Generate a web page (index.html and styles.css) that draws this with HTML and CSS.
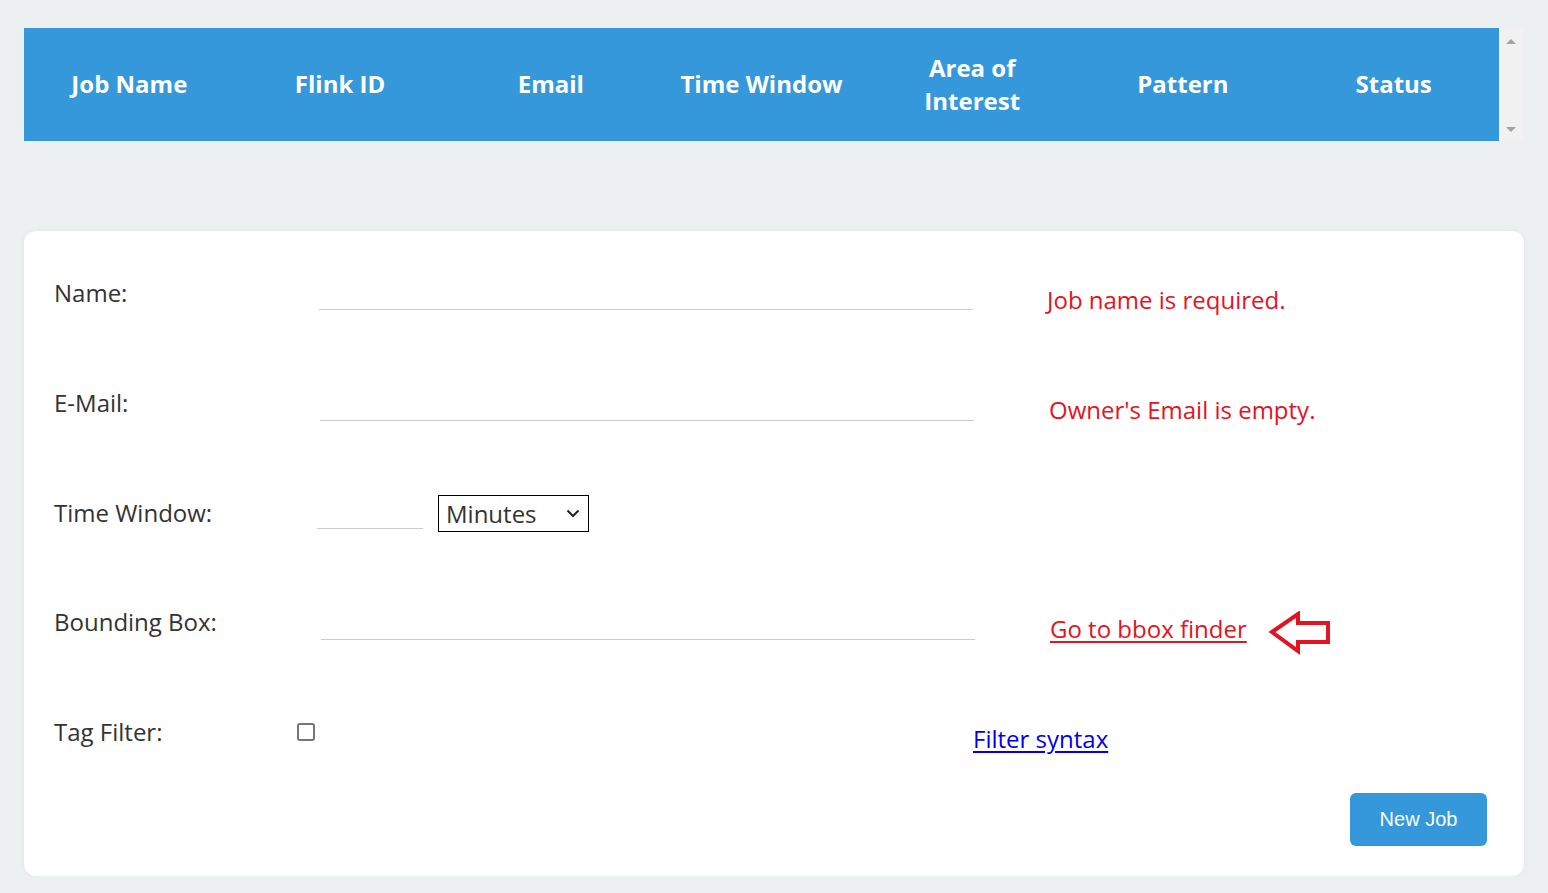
FILE: index.html
```html
<!DOCTYPE html>
<html lang="en">
<head>
<meta charset="utf-8">
<title>Jobs</title>
<link rel="stylesheet" href="styles.css">
</head>
<body>
<div class="jobs">
  <div class="jobs-head">
    <div class="th">Job Name</div>
    <div class="th">Flink ID</div>
    <div class="th">Email</div>
    <div class="th">Time Window</div>
    <div class="th">Area of Interest</div>
    <div class="th">Pattern</div>
    <div class="th">Status</div>
  </div>
  <div class="scrollbar">
    <span class="arrow-up"></span>
    <span class="arrow-down"></span>
  </div>
</div>

<form class="card">
  <div class="row">
    <label class="label">Name:</label>
    <div class="field"><input class="line-input wide" type="text"></div>
    <div class="msg error">Job name is required.</div>
  </div>
  <div class="row">
    <label class="label">E-Mail:</label>
    <div class="field"><input class="line-input wide email" type="text"></div>
    <div class="msg error email-msg">Owner's Email is empty.</div>
  </div>
  <div class="row">
    <label class="label">Time Window:</label>
    <div class="field">
      <input class="line-input short" type="text">
      <div class="select">
        <span>Minutes</span>
        <svg class="chev" width="14" height="9" viewBox="0 0 14 9"><path d="M1.5 1.5 L7 7 L12.5 1.5" fill="none" stroke="#222" stroke-width="2"/></svg>
      </div>
    </div>
    <div class="msg"></div>
  </div>
  <div class="row">
    <label class="label">Bounding Box:</label>
    <div class="field"><input class="line-input wide bbox" type="text"></div>
    <div class="msg bbox-msg">
      <a class="red-link" href="#">Go to bbox finder</a>
      <svg class="arrow" width="64" height="44" viewBox="0 0 64 44"><polygon points="4,21 30,3 30,12 60,12 60,31 30,31 30,40" fill="none" stroke="#e3131f" stroke-width="4" stroke-linejoin="miter"/></svg>
    </div>
  </div>
  <div class="row row-last">
    <label class="label">Tag Filter:</label>
    <div class="field"><span class="checkbox"></span></div>
    <div class="msg filter-msg"><a class="blue-link" href="#">Filter syntax</a></div>
  </div>
  <div class="actions">
    <button class="btn" type="button">New Job</button>
  </div>
</form>
</body>
</html>
```

FILE: styles.css
```css
* { box-sizing: border-box; }

body {
  margin: 0;
  padding: 28px 24px 0 24px;
  background: #ecf0f1;
  font-family: "Open Sans", "DejaVu Sans", sans-serif;
  color: #333;
}

.jobs {
  display: flex;
  width: 1499px;
  height: 113px;
}

.jobs-head {
  flex: 1;
  display: grid;
  grid-template-columns: repeat(7, 1fr);
  align-items: center;
  background: #3498db;
  padding-bottom: 2px;
}

.th {
  color: #fff;
  font-weight: 700;
  font-size: 24px;
  line-height: 33px;
  text-align: center;
  padding: 0 20px;
}

.scrollbar {
  width: 24px;
  background: #f1f1f1;
  display: flex;
  flex-direction: column;
  justify-content: space-between;
  align-items: center;
  padding: 11px 0 9px 0;
}

.arrow-up {
  width: 0;
  height: 0;
  border-left: 5px solid transparent;
  border-right: 5px solid transparent;
  border-bottom: 5px solid #a3a3a3;
}

.arrow-down {
  width: 0;
  height: 0;
  border-left: 5px solid transparent;
  border-right: 5px solid transparent;
  border-top: 5px solid #a3a3a3;
}

.card {
  margin-top: 90px;
  width: 1500px;
  height: 645px;
  background: #fff;
  border-radius: 12px;
  box-shadow: 0 0 6px rgba(0, 0, 0, 0.05);
  padding: 44px 37px 30px 30px;
  display: flex;
  flex-direction: column;
}

.row {
  display: grid;
  grid-template-columns: 239px 754px 1fr;
  align-items: start;
  height: 109.75px;
  flex-shrink: 0;
}

.row-last { height: 69px; }

.label {
  font-size: 24px;
  line-height: 36px;
  color: #333;
}

.field {
  display: flex;
  align-items: flex-start;
  height: 36px;
}

.line-input {
  border: none;
  border-bottom: 1px solid #ccc;
  height: 35px;
  font-family: inherit;
  font-size: 22px;
  background: transparent;
  outline: none;
  padding: 0;
}

.wide { width: 654px; margin-left: 26px; }
.wide.email { margin-left: 27px; height: 36px; }
.wide.bbox { margin-left: 28px; height: 36px; }

.short {
  width: 106px;
  margin-left: 24px;
  height: 34px;
}

.select {
  margin-left: 15px;
  width: 151px;
  height: 37px;
  border: 1px solid #000;
  display: flex;
  align-items: center;
  justify-content: space-between;
  padding: 0 8px 0 7px;
  font-size: 24px;
  color: #333;
}

.chev { margin-top: 1px; }

.msg {
  font-size: 24px;
  line-height: 36px;
  margin-top: 7px;
  display: flex;
  align-items: center;
}

.error { color: #e3131f; }
.email-msg { margin-left: 2px; margin-top: 7.5px; }

.bbox-msg {
  margin-left: 3px;
  margin-top: 7px;
  align-items: flex-start;
}

.red-link {
  color: #e3131f;
  text-decoration: underline;
  text-underline-offset: 3px;
}

.arrow { margin-left: 21px; margin-top: 0; }

.checkbox {
  width: 18px;
  height: 18px;
  margin-left: 4px;
  margin-top: 9px;
  border: 2px solid #767676;
  border-radius: 3px;
  background: #fff;
}

.filter-msg { margin-left: -74px; margin-top: 7px; }

.blue-link {
  color: #0000ee;
  text-decoration: underline;
  text-underline-offset: 3px;
}

.actions {
  display: flex;
  justify-content: flex-end;
  margin-top: auto;
}

.btn {
  width: 137px;
  height: 53px;
  background: #3498db;
  color: #fff;
  border: none;
  border-radius: 6px;
  font-family: "Liberation Sans", Arial, sans-serif;
  font-size: 20px;
  padding: 0;
}
```
